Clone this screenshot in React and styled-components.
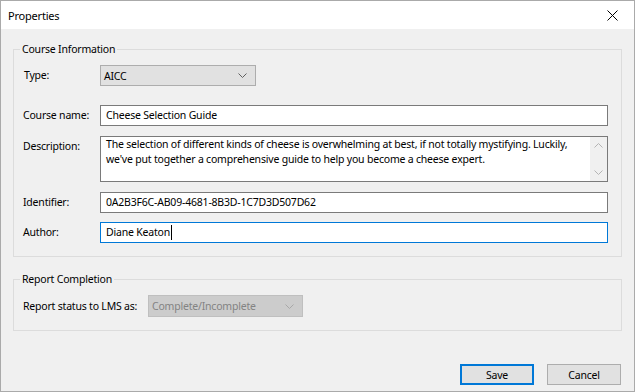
import styled, { createGlobalStyle } from "styled-components";

const Global = createGlobalStyle`
  html, body {
    margin: 0;
    padding: 0;
    background: #ffffff;
  }
  * {
    box-sizing: border-box;
  }
`;

const Window = styled.div`
  width: 635px;
  height: 392px;
  border: 1px solid #aaaaaa;
  background: #f0f0f0;
  display: flex;
  flex-direction: column;
  font-family: "Noto Sans", "Open Sans", sans-serif;
  font-size: 10.5px;
  letter-spacing: -0.2px;
  color: #000000;
`;

const TitleBar = styled.div`
  height: 28px;
  background: #ffffff;
  display: flex;
  align-items: center;
  justify-content: space-between;
  padding: 0 16px 0 7px;
  font-size: 11px;
`;

const Body = styled.div`
  flex: 1;
  display: flex;
  flex-direction: column;
  padding: 12px 12px 0 12px;
`;

const Group = styled.fieldset`
  margin: 0;
  margin-top: ${(p) => p.$top || 0}px;
  padding: 8px 13px 13px 9px;
  border: 1px solid #dcdcdc;
  min-width: 0;
`;

const Legend = styled.legend`
  padding: 0 2px;
  margin-left: -3px;
  line-height: 16px;
  font-size: 10.5px;
`;

const Form = styled.div`
  display: grid;
  grid-template-columns: ${(p) => p.$label}px 1fr;
  align-items: start;
`;

const Label = styled.div`
  line-height: 21px;
  height: 21px;
  margin-top: ${(p) => p.$top || 0}px;
  padding-left: ${(p) => p.$indent || 0}px;
`;

const ReportLabel = styled(Label)`
  width: 125px;
`;

const Field = styled.div`
  height: ${(p) => p.$h || 21}px;
  margin-top: ${(p) => p.$top || 0}px;
  background: #ffffff;
  border: 1px solid ${(p) => (p.$focus ? "#0078d7" : "#7a7a7a")};
  padding: 0 5px;
  line-height: 19px;
  white-space: nowrap;
  display: flex;
  align-items: center;
`;

const Caret = styled.span`
  display: inline-block;
  width: 1px;
  height: 15px;
  background: #000000;
  margin-left: 1px;
`;

const Select = styled.div`
  width: ${(p) => p.$w}px;
  height: ${(p) => p.$h || 21}px;
  background: ${(p) => (p.$disabled ? "#cccccc" : "#e1e1e1")};
  border: 1px solid ${(p) => (p.$disabled ? "#bfbfbf" : "#adadad")};
  color: ${(p) => (p.$disabled ? "#838383" : "#000000")};
  display: flex;
  align-items: center;
  justify-content: space-between;
  padding: 0 8px 0 3px;
`;

const TextArea = styled.div`
  height: 46px;
  margin-top: 10px;
  background: #ffffff;
  border: 1px solid #7a7a7a;
  display: flex;
`;

const TextBody = styled.div`
  flex: 1;
  padding: 0 5px;
  line-height: 15px;
  white-space: normal;
`;

const ScrollBar = styled.div`
  width: 17px;
  background: #f0f0f0;
  display: flex;
  flex-direction: column;
  justify-content: space-between;
  align-items: center;
  padding: 6px 0;
`;

const Row = styled.div`
  display: flex;
  align-items: center;
`;

const Footer = styled.div`
  margin-top: auto;
  display: flex;
  justify-content: flex-end;
  gap: 13px;
  padding: 0 13px 6px 0;
`;

const Button = styled.div`
  width: 74px;
  height: 21px;
  background: #e1e1e1;
  border: ${(p) => (p.$default ? "2px solid #0078d7" : "1px solid #adadad")};
  display: flex;
  align-items: center;
  justify-content: center;
`;

const Chevron = ({ up, color = "#606060", w = 9 }) => (
  <svg width={w} height="5" viewBox="0 0 9 5">
    <polyline
      points={up ? "0.5,4.5 4.5,0.5 8.5,4.5" : "0.5,0.5 4.5,4.5 8.5,0.5"}
      fill="none"
      stroke={color}
      strokeWidth="1"
    />
  </svg>
);

const CloseIcon = () => (
  <svg width="11" height="11" viewBox="0 0 11 11">
    <path d="M0.5 0.5 L10.5 10.5 M10.5 0.5 L0.5 10.5" stroke="#000" strokeWidth="1" />
  </svg>
);

const App = () => {
  return (
    <>
      <Global />
      <Window>
        <TitleBar>
          <span>Properties</span>
          <CloseIcon />
        </TitleBar>
        <Body>
          <Group>
            <Legend>Course Information</Legend>
            <Form $label={77}>
              <Label $indent={1}>Type:</Label>
              <Select $w={156}>
                <span>AICC</span>
                <Chevron />
              </Select>

              <Label $top={19}>Course name:</Label>
              <Field $top={19}>Cheese Selection Guide</Field>

              <Label $top={10}>Description:</Label>
              <TextArea>
                <TextBody>
                  The selection of different kinds of cheese is overwhelming at best, if not
                  totally mystifying. Luckily, we've put together a comprehensive guide to help
                  you become a cheese expert.
                </TextBody>
                <ScrollBar>
                  <Chevron up color="#b4b4b4" />
                  <Chevron color="#b4b4b4" />
                </ScrollBar>
              </TextArea>

              <Label $top={10}>Identifier:</Label>
              <Field $top={10}>0A2B3F6C-AB09-4681-8B3D-1C7D3D507D62</Field>

              <Label $top={9}>Author:</Label>
              <Field $top={9} $focus>
                Diane Keaton
                <Caret />
              </Field>
            </Form>
          </Group>

          <Group $top={14}>
            <Legend>Report Completion</Legend>
            <Row>
              <ReportLabel>Report status to LMS as:</ReportLabel>
              <Select $w={155} $h={22} $disabled>
                <span>Complete/Incomplete</span>
                <Chevron color="#a8a8a8" />
              </Select>
            </Row>
          </Group>
        </Body>
        <Footer>
          <Button $default>Save</Button>
          <Button>Cancel</Button>
        </Footer>
      </Window>
    </>
  );
};

export default App;
